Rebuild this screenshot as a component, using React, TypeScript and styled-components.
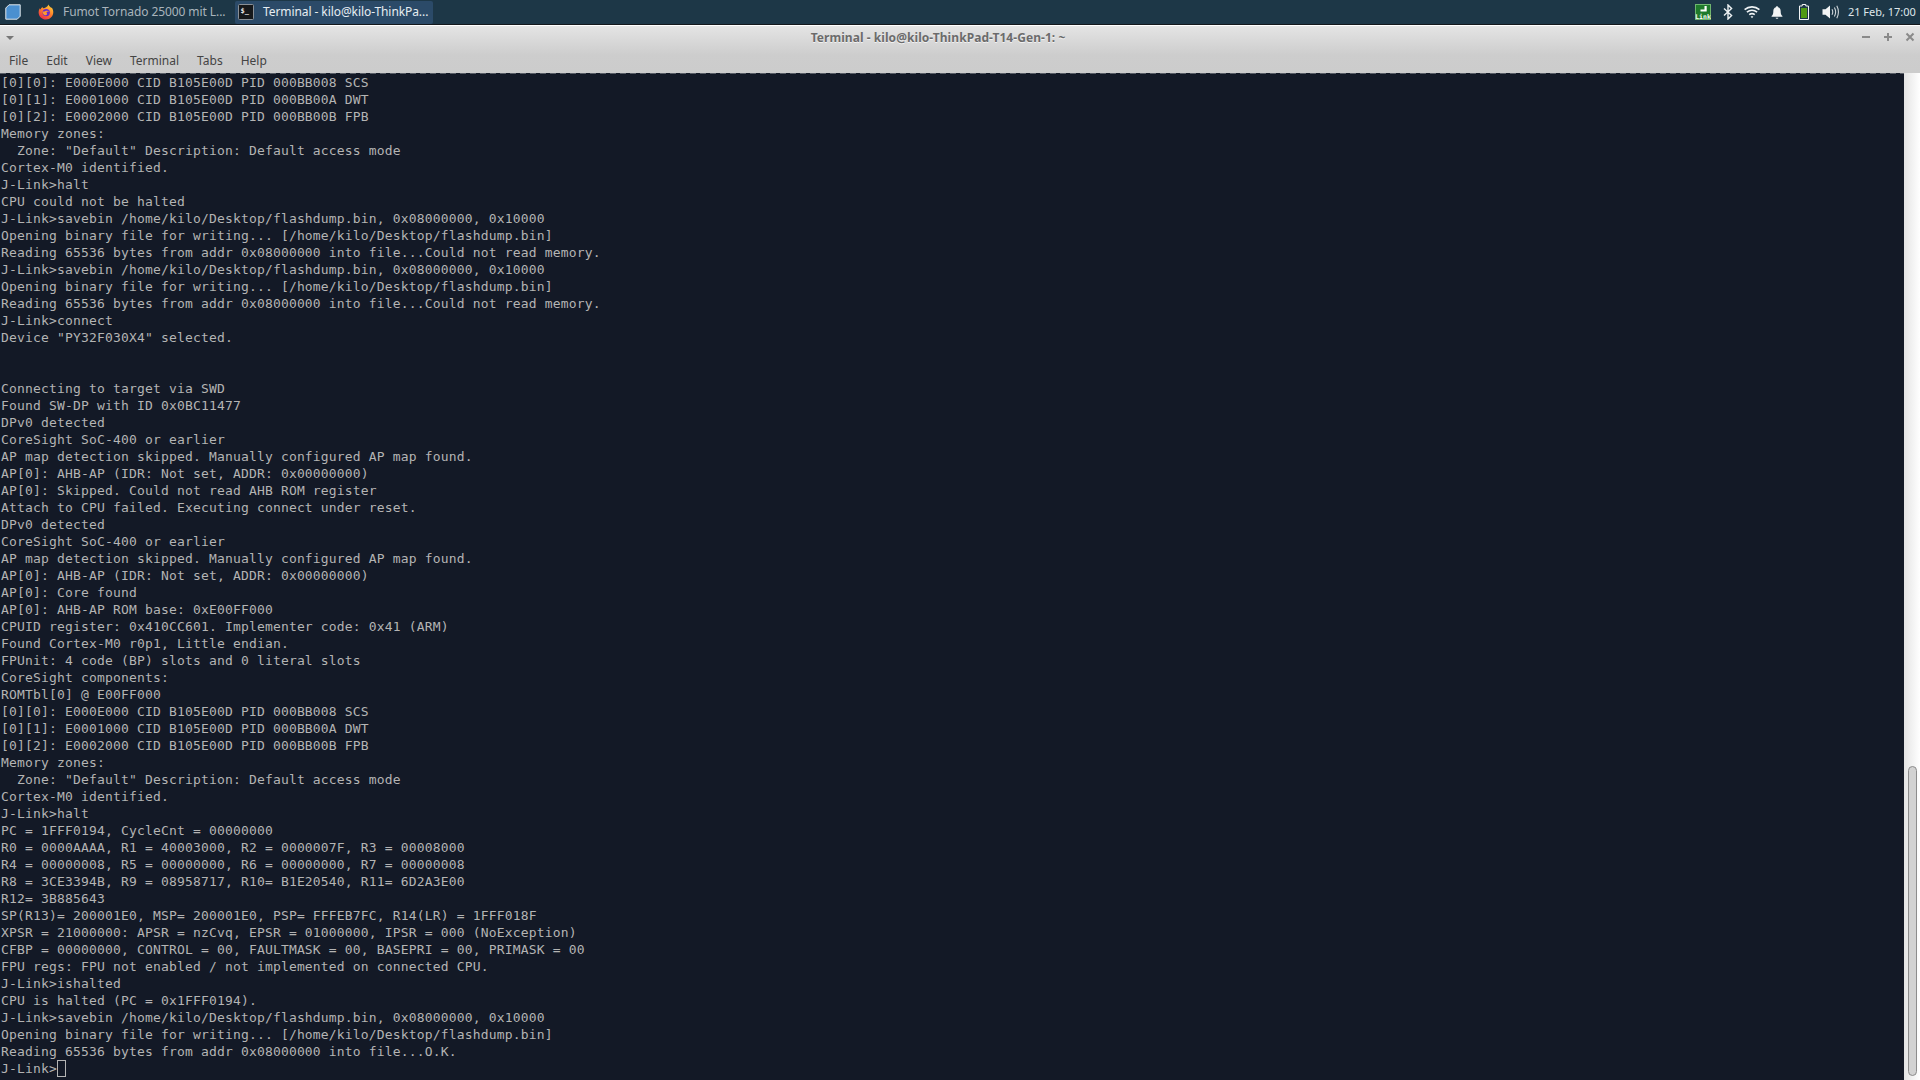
import styled, { createGlobalStyle } from "styled-components";

const GlobalStyle = createGlobalStyle`
  html, body, #root {
    margin: 0;
    height: 100%;
    overflow: hidden;
  }
`;

const OUTPUT = `[0][0]: E000E000 CID B105E00D PID 000BB008 SCS
[0][1]: E0001000 CID B105E00D PID 000BB00A DWT
[0][2]: E0002000 CID B105E00D PID 000BB00B FPB
Memory zones:
  Zone: "Default" Description: Default access mode
Cortex-M0 identified.
J-Link>halt
CPU could not be halted
J-Link>savebin /home/kilo/Desktop/flashdump.bin, 0x08000000, 0x10000
Opening binary file for writing... [/home/kilo/Desktop/flashdump.bin]
Reading 65536 bytes from addr 0x08000000 into file...Could not read memory.
J-Link>savebin /home/kilo/Desktop/flashdump.bin, 0x08000000, 0x10000
Opening binary file for writing... [/home/kilo/Desktop/flashdump.bin]
Reading 65536 bytes from addr 0x08000000 into file...Could not read memory.
J-Link>connect
Device "PY32F030X4" selected.


Connecting to target via SWD
Found SW-DP with ID 0x0BC11477
DPv0 detected
CoreSight SoC-400 or earlier
AP map detection skipped. Manually configured AP map found.
AP[0]: AHB-AP (IDR: Not set, ADDR: 0x00000000)
AP[0]: Skipped. Could not read AHB ROM register
Attach to CPU failed. Executing connect under reset.
DPv0 detected
CoreSight SoC-400 or earlier
AP map detection skipped. Manually configured AP map found.
AP[0]: AHB-AP (IDR: Not set, ADDR: 0x00000000)
AP[0]: Core found
AP[0]: AHB-AP ROM base: 0xE00FF000
CPUID register: 0x410CC601. Implementer code: 0x41 (ARM)
Found Cortex-M0 r0p1, Little endian.
FPUnit: 4 code (BP) slots and 0 literal slots
CoreSight components:
ROMTbl[0] @ E00FF000
[0][0]: E000E000 CID B105E00D PID 000BB008 SCS
[0][1]: E0001000 CID B105E00D PID 000BB00A DWT
[0][2]: E0002000 CID B105E00D PID 000BB00B FPB
Memory zones:
  Zone: "Default" Description: Default access mode
Cortex-M0 identified.
J-Link>halt
PC = 1FFF0194, CycleCnt = 00000000
R0 = 0000AAAA, R1 = 40003000, R2 = 0000007F, R3 = 00008000
R4 = 00000008, R5 = 00000000, R6 = 00000000, R7 = 00000008
R8 = 3CE3394B, R9 = 08958717, R10= B1E20540, R11= 6D2A3E00
R12= 3B885643
SP(R13)= 200001E0, MSP= 200001E0, PSP= FFFEB7FC, R14(LR) = 1FFF018F
XPSR = 21000000: APSR = nzCvq, EPSR = 01000000, IPSR = 000 (NoException)
CFBP = 00000000, CONTROL = 00, FAULTMASK = 00, BASEPRI = 00, PRIMASK = 00
FPU regs: FPU not enabled / not implemented on connected CPU.
J-Link>ishalted
CPU is halted (PC = 0x1FFF0194).
J-Link>savebin /home/kilo/Desktop/flashdump.bin, 0x08000000, 0x10000
Opening binary file for writing... [/home/kilo/Desktop/flashdump.bin]
Reading 65536 bytes from addr 0x08000000 into file...O.K.`.split("\n");

const MENU = ["File", "Edit", "View", "Terminal", "Tabs", "Help"];

const Desktop = styled.div`
  display: flex;
  flex-direction: column;
  height: 100vh;
  font-family: "Noto Sans", sans-serif;
`;

const Panel = styled.header`
  display: flex;
  align-items: center;
  height: 24px;
  flex: none;
  padding-left: 5px;
  background: #1d3747;
  border-bottom: 1px solid #14181c;
`;

const Launcher = styled.div`
  display: flex;
  width: 16px;
  height: 16px;
  margin-right: 14px;
`;

const TaskButton = styled.div<{ $active?: boolean }>`
  display: flex;
  align-items: center;
  gap: 9px;
  height: 23px;
  width: ${(p) => (p.$active ? "198px" : "200px")};
  padding-left: 3px;
  box-sizing: border-box;
  border-radius: 2px;
  font-size: 12px;
  letter-spacing: -0.08px;
  white-space: nowrap;
  color: ${(p) => (p.$active ? "#e6edf2" : "#a9b4bc")};
  background: ${(p) => (p.$active ? "#2b4a68" : "transparent")};
`;

const TaskLabel = styled.span`
  margin-bottom: 2px;
`;

const Tray = styled.div`
  display: flex;
  align-items: center;
  margin-left: auto;
  height: 100%;
`;

const TraySlot = styled.div<{ $w: number }>`
  display: flex;
  justify-content: center;
  width: ${(p) => p.$w}px;
`;

const Clock = styled.div`
  width: 67px;
  font-size: 11px;
  letter-spacing: -0.03px;
  text-align: right;
  color: #dfe6ea;
  margin: 0 5px 2px;
  white-space: nowrap;
`;

const Chrome = styled.div`
  flex: none;
  border-top: 1px solid #fff;
  background: linear-gradient(#e4e4e4, #cdcdcd 62%, #cccccc);
`;

const TitleBar = styled.div`
  position: relative;
  display: flex;
  align-items: center;
  justify-content: center;
  height: 22px;
  padding-right: 44px;
  font-size: 12px;
  font-weight: 700;
  letter-spacing: 0.06px;
  color: #6b6b6b;
  text-shadow: 0 1px 0 #f2f2f2;
`;

const WindowMenuArrow = styled.div`
  position: absolute;
  left: 6px;
  top: 10px;
  border-left: 4px solid transparent;
  border-right: 4px solid transparent;
  border-top: 4px solid #777;
`;

const WindowButtons = styled.div`
  position: absolute;
  right: 2px;
  top: 5px;
  display: flex;
  gap: 6px;
`;

const MenuBar = styled.nav`
  display: flex;
  height: 25px;
  padding-left: 2px;
  align-items: center;
  font-size: 12px;
  color: #444;
`;

const MenuItem = styled.span`
  padding: 0 7px 0 7px;
  margin-right: 4px;
`;

const TerminalArea = styled.main`
  flex: 1;
  min-height: 0;
  display: flex;
`;

const Output = styled.div`
  flex: 1;
  min-width: 0;
  background: #131926;
  color: #b4b4b4;
  font-family: "DejaVu Sans Mono", monospace;
  font-size: 13px;
  letter-spacing: 0.17px;
  line-height: 17px;
  white-space: pre;
  overflow: hidden;
`;

const TabRule = styled.div`
  height: 1px;
  background: repeating-linear-gradient(to right, #5a5f68 0 6px, transparent 6px 10px);
`;

const Line = styled.div`
  height: 17px;
  padding-left: 1px;
`;

const Cursor = styled.span`
  display: inline-block;
  box-sizing: border-box;
  width: 9px;
  height: 17px;
  vertical-align: top;
  border: 1px solid #b4b4b4;
`;

const ScrollTrack = styled.div`
  flex: none;
  width: 16px;
  display: flex;
  flex-direction: column;
  justify-content: flex-end;
  align-items: flex-start;
  padding: 0 0 4px 4px;
  box-sizing: border-box;
  background: linear-gradient(to right, #e4e4e4, #fff);
`;

const ScrollThumb = styled.div`
  width: 9px;
  height: 310px;
  box-sizing: border-box;
  border: 1px solid #8c8c8c;
  border-radius: 5px;
  background: #d2d2d2;
`;

function FirefoxIcon() {
  return (
    <svg width="16" height="16" viewBox="0 0 16 16">
      <defs>
        <linearGradient id="ff" x1="0.8" y1="0" x2="0.2" y2="1">
          <stop offset="0" stopColor="#ffd53a" />
          <stop offset="0.5" stopColor="#ff7a2a" />
          <stop offset="1" stopColor="#e8254f" />
        </linearGradient>
      </defs>
      <path d="M10.5 0.5c.3 1.6 1.6 2 2.6 3.3.5-.2.7-.2 1 .2.8 1.4 1.2 2.6 1.2 4 0 4.2-3.2 7.5-7.3 7.5S.6 12.4.6 8.2c0-1.4.4-2.8 1.2-4 .1.6.3 1 .6 1.3.5-1.2 1.2-2.1 2.2-2.6 0 .7.2 1.1.6 1.4 1.7-.2 4.2-1.2 5.3-3.8z" fill="url(#ff)" />
      <circle cx="8.2" cy="8.6" r="3.7" fill="#6b2bc9" />
      <path d="M4.4 7.4c1 .3 2 .2 3-.4 1.4-.7 3-.4 4 .8-1.2-.6-2.4-.3-3 .5.8 1 .8 2 .1 2.8-1.5.6-3.6-.4-4.1-3.7z" fill="#ff9a2e" />
    </svg>
  );
}

function LauncherIcon() {
  return (
    <svg width="16" height="16" viewBox="0 0 16 16">
      <path d="M4 .8h11.2v11.4l-3 3H.8V4z" fill="#4a90d0" stroke="#dfe6ea" strokeWidth="1" />
    </svg>
  );
}

function TerminalIcon() {
  return (
    <svg width="16" height="16" viewBox="0 0 16 16">
      <rect x="0.5" y="0.5" width="15" height="15" rx="1" fill="#16181a" stroke="#8a9096" />
      <text x="2.5" y="9" fontFamily="DejaVu Sans Mono, monospace" fontWeight="700" fontSize="7" fill="#e6e6e6">$_</text>
    </svg>
  );
}

function JLinkIcon() {
  return (
    <svg width="16" height="16" viewBox="0 0 16 16">
      <rect x="0.5" y="0.5" width="15" height="15" fill="#1f7a2c" stroke="#6fb56f" />
      <path d="M9.5 2h2.2v5.5H5.5V5.6h4z" fill="#fff" />
      <text x="8" y="14.5" fontFamily="DejaVu Sans Mono, monospace" fontWeight="700" fontSize="6.5" fill="#fff" textAnchor="middle">Link</text>
    </svg>
  );
}

function BluetoothIcon() {
  return (
    <svg width="10" height="16" viewBox="0 0 10 16">
      <path d="M1 4.4l7.6 7.1L5 15V1l3.6 3.5L1 11.6" fill="none" stroke="#eef2f4" strokeWidth="1.4" />
    </svg>
  );
}

function WifiIcon() {
  return (
    <svg width="16" height="14" viewBox="0 0 16 14">
      <path d="M.6 4.6C4.8.9 11.2.9 15.4 4.6M2.9 7.2c3-2.5 7.2-2.5 10.2 0M5.2 9.6c1.7-1.2 3.9-1.2 5.6 0" fill="none" stroke="#eef2f4" strokeWidth="1.6" />
      <path d="M6.6 11.6L8 13.2l1.4-1.6c-.8-.5-2-.5-2.8 0z" fill="#eef2f4" />
    </svg>
  );
}

function BellIcon() {
  return (
    <svg width="12" height="15" viewBox="0 0 14 16">
      <path d="M7 0.8c.8 0 1.2.5 1.3 1.2 2 .6 3 2.3 3 4.4 0 3 .6 4.4 2 5.6v.9H.7V12c1.4-1.2 2-2.6 2-5.6 0-2.1 1-3.8 3-4.4C5.8 1.3 6.2.8 7 .8z" fill="#f2f4f5" />
      <path d="M5.4 14h3.2c-.2.9-.8 1.3-1.6 1.3S5.6 14.9 5.4 14z" fill="#f2f4f5" />
    </svg>
  );
}

function BatteryIcon() {
  return (
    <svg width="10" height="16" viewBox="0 0 10 16">
      <path d="M3.2.5h3.6v1.5h2.7v13.5H.5V2h2.7z" fill="#1d3747" stroke="#f2f4f5" />
      <rect x="2" y="4" width="6" height="10" fill="#4f9a12" />
    </svg>
  );
}

function VolumeIcon() {
  return (
    <svg width="17" height="16" viewBox="0 0 17 16">
      <path d="M.5 5.2h3L8 1.4v13.2l-4.5-3.8h-3z" fill="#f2f4f5" />
      <path d="M10 5.2c.9 1.7.9 3.9 0 5.6M12.4 3.4c1.5 2.8 1.5 6.4 0 9.2M14.8 1.8c2 3.8 2 8.6 0 12.4" fill="none" stroke="#cfd6da" strokeWidth="1.1" />
    </svg>
  );
}

function WindowGlyph({ kind }: { kind: "min" | "max" | "close" }) {
  return (
    <svg width="16" height="12" viewBox="0 0 16 12">
      {kind === "min" && <path d="M4 6h8" stroke="#8a8a8a" strokeWidth="2" />}
      {kind === "max" && <path d="M4 6h8M8 2v8" stroke="#8a8a8a" strokeWidth="2" />}
      {kind === "close" && <path d="M4.5 2.5l7 7M11.5 2.5l-7 7" stroke="#8a8a8a" strokeWidth="2" />}
    </svg>
  );
}

export default function App() {
  return (
    <>
      <GlobalStyle />
      <Desktop>
        <Panel>
          <Launcher>
            <LauncherIcon />
          </Launcher>
          <TaskButton>
            <FirefoxIcon />
            <TaskLabel>Fumot Tornado 25000 mit L...</TaskLabel>
          </TaskButton>
          <TaskButton $active>
            <TerminalIcon />
            <TaskLabel>Terminal - kilo@kilo-ThinkPa...</TaskLabel>
          </TaskButton>
          <Tray>
            <TraySlot $w={24}><JLinkIcon /></TraySlot>
            <TraySlot $w={26}><BluetoothIcon /></TraySlot>
            <TraySlot $w={22}><WifiIcon /></TraySlot>
            <TraySlot $w={28}><BellIcon /></TraySlot>
            <TraySlot $w={26}><BatteryIcon /></TraySlot>
            <TraySlot $w={26}><VolumeIcon /></TraySlot>
            <Clock>21 Feb, 17:00</Clock>
          </Tray>
        </Panel>
        <Chrome>
          <TitleBar>
            <WindowMenuArrow />
            Terminal - kilo@kilo-ThinkPad-T14-Gen-1: ~
            <WindowButtons>
              <WindowGlyph kind="min" />
              <WindowGlyph kind="max" />
              <WindowGlyph kind="close" />
            </WindowButtons>
          </TitleBar>
          <MenuBar>
            {MENU.map((m) => (
              <MenuItem key={m}>{m}</MenuItem>
            ))}
          </MenuBar>
        </Chrome>
        <TerminalArea>
          <Output>
            <TabRule />
            {OUTPUT.map((line, i) => (
              <Line key={i}>{line}</Line>
            ))}
            <Line>
              J-Link&gt;
              <Cursor />
            </Line>
          </Output>
          <ScrollTrack>
            <ScrollThumb />
          </ScrollTrack>
        </TerminalArea>
      </Desktop>
    </>
  );
}
